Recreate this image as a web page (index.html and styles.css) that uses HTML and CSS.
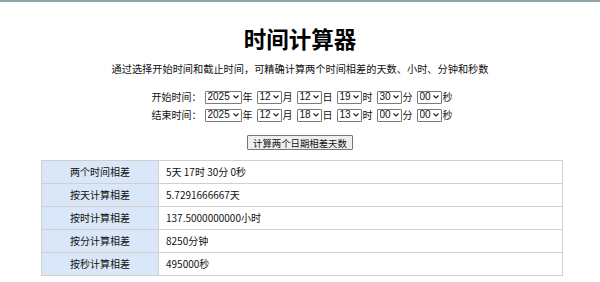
FILE: index.html
```html
<!DOCTYPE html>
<html lang="zh-CN">
<head>
<meta charset="utf-8">
<title>时间计算器</title>
<link rel="stylesheet" href="styles.css">
</head>
<body>
<div class="page">
  <h1 class="title">时间计算器</h1>
  <p class="intro">通过选择开始时间和截止时间，可精确计算两个时间相差的天数、小时、分钟和秒数</p>
  <div class="form">
    <div class="row">
      <span class="label">开始时间：</span><select class="sel year"><option>2025</option></select><span class="unit">年</span>
      <select class="sel"><option>12</option></select><span class="unit">月</span>
      <select class="sel"><option>12</option></select><span class="unit">日</span>
      <select class="sel"><option>19</option></select><span class="unit">时</span>
      <select class="sel"><option>30</option></select><span class="unit">分</span>
      <select class="sel"><option>00</option></select><span class="unit">秒</span>
    </div>
    <div class="row">
      <span class="label">结束时间：</span><select class="sel year"><option>2025</option></select><span class="unit">年</span>
      <select class="sel"><option>12</option></select><span class="unit">月</span>
      <select class="sel"><option>18</option></select><span class="unit">日</span>
      <select class="sel"><option>13</option></select><span class="unit">时</span>
      <select class="sel"><option>00</option></select><span class="unit">分</span>
      <select class="sel"><option>00</option></select><span class="unit">秒</span>
    </div>
    <div class="actions">
      <button class="btn" type="button">计算两个日期相差天数</button>
    </div>
  </div>
  <table class="result">
    <tr><th>两个时间相差</th><td>5天 17时 30分 0秒</td></tr>
    <tr><th>按天计算相差</th><td>5.7291666667天</td></tr>
    <tr><th>按时计算相差</th><td>137.5000000000小时</td></tr>
    <tr><th>按分计算相差</th><td>8250分钟</td></tr>
    <tr><th>按秒计算相差</th><td>495000秒</td></tr>
  </table>
</div>
</body>
</html>
```
FILE: styles.css
```css
html, body {
  margin: 0;
  padding: 0;
  background: #ffffff;
}
body {
  font-family: "Noto Sans CJK SC", "Noto Sans", sans-serif;
  color: #111;
  border-top: 2px solid #93a4ad;
}
.page {
  display: flex;
  flex-direction: column;
}
.title {
  margin: 23px 0 0;
  font-size: 22.5px;
  line-height: 26px;
  font-weight: 700;
  text-align: center;
  color: #000;
}
.intro {
  margin: 11px 0 0;
  font-size: 10.2px;
  line-height: 14px;
  text-align: center;
  color: #111;
}
.form {
  margin-top: 12px;
  display: flex;
  flex-direction: column;
  align-items: center;
}
.row {
  display: flex;
  align-items: center;
  height: 18px;
  font-size: 10px;
  line-height: 12px;
  padding-left: 4px;
}
.label {
  margin-right: 1px;
}
.sel {
  -webkit-appearance: none;
  appearance: none;
  font-family: "Liberation Sans", "Noto Sans", sans-serif;
  font-size: 10px;
  line-height: 10px;
  height: 13px;
  width: 25px;
  padding: 0 0 0 2px;
  margin: 0 1px 0 4px;
  border: 1px solid #7a7a7a;
  border-radius: 1px;
  background: #fff url("data:image/svg+xml;utf8,<svg xmlns='http://www.w3.org/2000/svg' width='6' height='4' viewBox='0 0 6 4'><path d='M0.5 0.5 L3 3 L5.5 0.5' fill='none' stroke='%23222' stroke-width='1.2'/></svg>") no-repeat right 2px center;
  color: #111;
  box-sizing: border-box;
}
.sel.year {
  width: 37px;
  margin-left: 2px;
}
.actions {
  display: flex;
  margin-top: 11px;
}
.btn {
  font-family: "Noto Sans CJK SC", sans-serif;
  font-size: 9.4px;
  line-height: 12px;
  height: 15px;
  padding: 0 5px;
  border: 1px solid #767676;
  border-radius: 1px;
  background: #efefef;
  color: #111;
}
.result {
  margin: 10px 37px 0 41px;
  border-collapse: collapse;
  font-size: 10px;
  line-height: 12px;
}
.result th,
.result td {
  border: 1px solid #d0d0d0;
  height: 23px;
  padding: 0;
  box-sizing: border-box;
}
.result th {
  width: 117px;
  background: #d9e7f8;
  font-weight: 400;
  text-align: center;
}
.result td {
  padding-left: 7px;
  text-align: left;
}
```
